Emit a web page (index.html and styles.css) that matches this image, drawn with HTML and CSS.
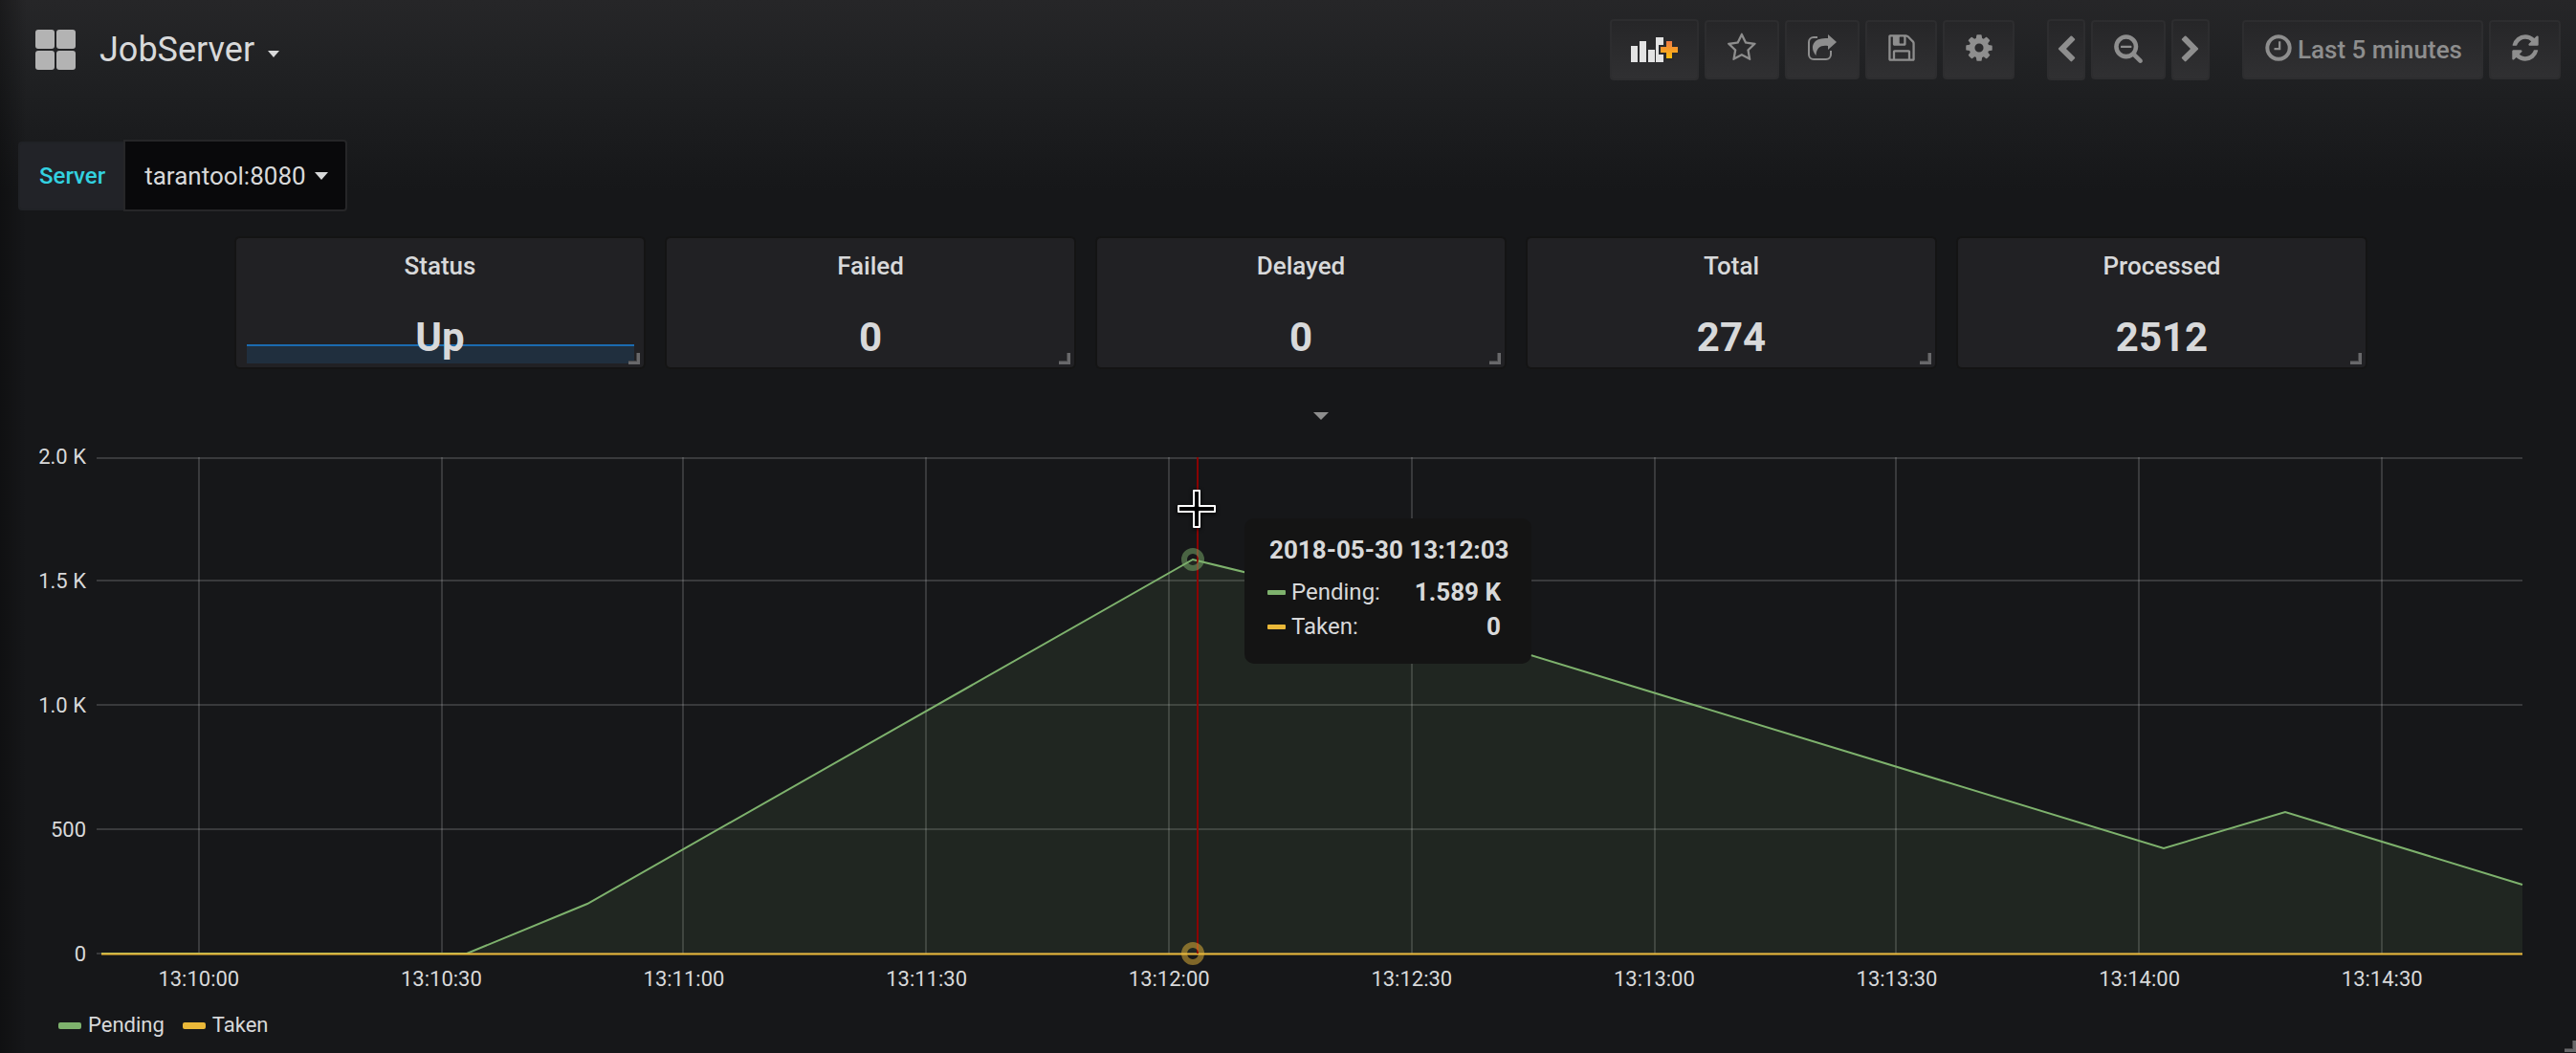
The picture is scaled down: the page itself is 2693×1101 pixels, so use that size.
FILE: index.html
```html
<!DOCTYPE html>
<html lang="en">
<head>
<meta charset="utf-8">
<title>JobServer</title>
<link rel="stylesheet" href="styles.css">
</head>
<body>
<header class="navbar">
  <button class="title" type="button">
    <svg class="title-icon" viewBox="0 0 42 42" aria-hidden="true"><rect width="20" height="20" rx="3"/><rect x="22" width="20" height="20" rx="3"/><rect y="22" width="20" height="20" rx="3"/><rect x="22" y="22" width="20" height="20" rx="3"/></svg>
    <span class="title-text">JobServer</span>
    <span class="caret caret-sm"></span>
  </button>
  <div class="tools">
    <div class="group">
      <button class="btn btn-add" type="button" aria-label="Add panel">
        <svg class="icon-add" viewBox="0 0 50 26"><defs><linearGradient id="plus" x1="0" y1="0" x2="0" y2="1"><stop offset="0" stop-color="#ef7a45"/><stop offset="1" stop-color="#fcbe0c"/></linearGradient></defs><path fill="#e3e3e3" d="M0 9h7v17H0zM9 4h7v22H9zM18 13h7v13h-7zM26 0h8v26h-8z"/><path fill="url(#plus)" stroke="#2a2a2c" stroke-width="4" paint-order="stroke" d="M37 4h6v6h6v6h-6v6h-6v-6h-6v-6h6z"/></svg>
      </button>
      <button class="btn btn-lg" type="button" aria-label="Star"><svg class="icon" viewBox="0 0 1664 1792"><path d="M1137 1004l306-297-422-62-189-382-189 382-422 62 306 297-73 421 378-199 377 199zm527-357q0 22-26 48l-363 354 86 500q1 7 1 20 0 50-41 50-19 0-40-12l-449-236-449 236q-22 12-40 12-21 0-31.5-14.5t-10.5-35.5q0-6 2-20l86-500-364-354q-25-27-25-48 0-37 56-46l502-73 225-455q19-41 49-41t49 41l225 455 502 73q56 9 56 46z"/></svg></button>
      <button class="btn btn-lg" type="button" aria-label="Share"><svg class="icon-share" viewBox="0 0 30 28"><path fill="none" stroke="#8e8e8e" stroke-width="2" d="M10 3H6a5 5 0 0 0-5 5v13a5 5 0 0 0 5 5h13a5 5 0 0 0 5-5v-4"/><path d="M21 0l9 8-9 8v-4c-7-1-12 1-12.500 10C5 18 4 13 6 9.500 9 4.500 14 4 21 4z"/></svg></button>
      <button class="btn btn-md" type="button" aria-label="Save"><svg class="icon" viewBox="0 0 1792 1792"><path d="M512 1536h768v-384h-768v384zm896 0h128v-896q0-14-10-38.500t-20-34.500l-281-281q-10-10-34-20t-39-10v416q0 40-28 68t-68 28h-576q-40 0-68-28t-28-68v-416h-128v1280h128v-416q0-40 28-68t68-28h832q40 0 68 28t28 68v416zm-384-928v-320q0-13-9.500-22.500t-22.500-9.500h-192q-13 0-22.500 9.500t-9.500 22.500v320q0 13 9.500 22.500t22.500 9.500h192q13 0 22.500-9.500t9.500-22.500zm640 32v928q0 40-28 68t-68 28h-1344q-40 0-68-28t-28-68v-1344q0-40 28-68t68-28h928q40 0 88 20t76 48l280 280q28 28 48 76t20 88z"/></svg></button>
      <button class="btn btn-md" type="button" aria-label="Settings"><svg class="icon" viewBox="0 0 1792 1792"><path d="M1152 896q0-106-75-181t-181-75-181 75-75 181 75 181 181 75 181-75 75-181zm512-109v222q0 12-8 23t-20 13l-185 28q-19 54-39 91 35 50 107 138 10 12 10 25t-9 23q-27 37-99 108t-94 71q-12 0-26-9l-138-108q-44 23-91 38-16 136-29 186-7 28-36 28h-222q-14 0-24.500-8.500t-11.500-21.500l-28-184q-49-16-90-37l-141 107q-10 9-25 9-14 0-25-11-126-114-165-168-7-10-7-23 0-12 8-23 15-21 51-66.500t54-70.500q-27-50-41-99l-183-27q-13-2-21-12.500t-8-23.500v-222q0-12 8-23t19-13l186-28q14-46 39-92-40-57-107-138-10-12-10-24 0-10 9-23 26-36 98.500-107.500t94.500-71.500q13 0 26 10l138 107q44-23 91-38 16-136 29-186 7-28 36-28h222q14 0 24.500 8.500t11.500 21.500l28 184q49 16 90 37l142-107q9-9 24-9 13 0 25 10 129 119 165 170 7 8 7 22 0 12-8 23-15 21-51 66.500t-54 70.500q26 50 41 98l183 28q13 2 21 12.500t8 23.500z"/></svg></button>
    </div>
    <div class="group">
      <button class="btn btn-nav" type="button" aria-label="Shift time back"><svg class="icon-nav" viewBox="0 0 1792 1792"><path d="M1427 301l-531 531 531 531q19 19 19 45t-19 45l-166 166q-19 19-45 19t-45-19l-742-742q-19-19-19-45t19-45l742-742q19-19 45-19t45 19l166 166q19 19 19 45t-19 45z"/></svg></button>
      <button class="btn btn-lg" type="button" aria-label="Zoom out"><svg class="icon" viewBox="0 0 1792 1792"><path d="M1088 800v64q0 13-9.500 22.500t-22.500 9.500h-576q-13 0-22.500-9.500t-9.500-22.500v-64q0-13 9.500-22.500t22.500-9.500h576q13 0 22.500 9.500t9.500 22.500zm128 32q0-185-131.500-316.500t-316.500-131.500-316.500 131.500-131.500 316.500 131.500 316.500 316.500 131.500 316.500-131.500 131.500-316.500zm512 832q0 53-37.500 90.500t-90.500 37.500q-54 0-90-38l-343-342q-179 124-399 124-143 0-273.500-55.500t-225-150-150-225-55.500-273.500 55.500-273.500 150-225 225-150 273.500-55.500 273.500 55.500 225 150 150 225 55.500 273.500q0 220-124 399l343 343q37 37 37 90z"/></svg></button>
      <button class="btn btn-nav" type="button" aria-label="Shift time forward"><svg class="icon-nav" viewBox="0 0 1792 1792"><path d="M1363 877l-742 742q-19 19-45 19t-45-19l-166-166q-19-19-19-45t19-45l531-531-531-531q-19-19-19-45t19-45l166-166q19-19 45-19t45 19l742 742q19 19 19 45t-19 45z"/></svg></button>
    </div>
    <div class="group">
      <button class="btn btn-time" type="button"><svg class="icon" viewBox="0 0 1792 1792"><path d="M1024 544v448q0 14-9 23t-23 9h-320q-14 0-23-9t-9-23v-64q0-14 9-23t23-9h224v-352q0-14 9-23t23-9h64q14 0 23 9t9 23zm416 352q0-148-73-273t-198-198-273-73-273 73-198 198-73 273 73 273 198 198 273 73 273-73 198-198 73-273zm224 0q0 209-103 385.500t-279.500 279.500-385.500 103-385.500-103-279.500-279.500-103-385.500 103-385.500 279.500-279.500 385.500-103 385.500 103 279.500 279.500 103 385.500z"/></svg><span class="time-text">Last 5 minutes</span></button>
      <button class="btn btn-md" type="button" aria-label="Refresh"><svg class="icon" viewBox="0 0 1792 1792"><path d="M1639 1056q0 5-1 7-64 268-268 434.500t-478 166.500q-146 0-282.500-55t-243.500-157l-129 129q-19 19-45 19t-45-19-19-45v-448q0-26 19-45t45-19h448q26 0 45 19t19 45-19 45l-137 137q71 66 161 102t187 36q134 0 250-65t186-179q11-17 53-117 8-23 30-23h192q13 0 22.500 9.500t9.500 22.500zm25-800v448q0 26-19 45t-45 19h-448q-26 0-45-19t-19-45 19-45l138-138q-148-137-349-137-134 0-250 65t-186 179q-11 17-53 117-8 23-30 23h-199q-13 0-22.500-9.500t-9.500-22.500v-7q65-268 270-434.500t480-166.500q146 0 284 55.500t245 156.500l130-129q19-19 45-19t45 19 19 45z"/></svg></button>
    </div>
  </div>
</header>

<main>
  <div class="submenu">
    <label class="var-label" for="server">Server</label>
    <button class="var-value" id="server" type="button">tarantool:8080<span class="caret"></span></button>
  </div>

  <section class="stats">
    <article class="stat"><div class="spark"></div><h2 class="stat-title">Status</h2><p class="stat-value">Up</p><span class="handle"></span></article>
    <article class="stat"><h2 class="stat-title">Failed</h2><p class="stat-value">0</p><span class="handle"></span></article>
    <article class="stat"><h2 class="stat-title">Delayed</h2><p class="stat-value">0</p><span class="handle"></span></article>
    <article class="stat"><h2 class="stat-title">Total</h2><p class="stat-value">274</p><span class="handle"></span></article>
    <article class="stat"><h2 class="stat-title">Processed</h2><p class="stat-value">2512</p><span class="handle"></span></article>
  </section>

  <section class="graph">
    <div class="graph-menu"><span class="caret caret-menu"></span></div>
    <div class="chart">
      <div class="y-axis"><span>2.0 K</span><span>1.5 K</span><span>1.0 K</span><span>500</span><span>0</span></div>
      <div class="plot">
        <svg class="series" viewBox="0 0 2536 521" preserveAspectRatio="none" aria-hidden="true">
          <path class="grid" d="M0 1H2536M0 129H2536M0 259H2536M0 389H2536M0 519H2536"/>
          <path class="grid" d="M107 0V519M361 0V519M613 0V519M867 0V519M1121 0V519M1375 0V519M1629 0V519M1881 0V519M2135 0V519M2389 0V519"/>
          <path class="area" d="M387 519L513 467 1146 107 1273 138 2161 409 2288 371 2536 447V519z"/>
          <path class="pending" d="M5 519H387L513 467 1146 107 1273 138 2161 409 2288 371 2536 447"/>
          <path class="taken" d="M5 519.500H2536"/>
        </svg>
        <span class="crosshair"></span>
        <span class="point point-pending"></span>
        <span class="point point-taken"></span>
        <svg class="cursor" viewBox="0 0 40 40" aria-hidden="true"><path d="M17 1h6v16h16v6H23v16h-6V23H1v-6h16z" fill="#000" stroke="#fff" stroke-width="2" stroke-linejoin="round"/></svg>
        <div class="tooltip">
          <div class="tip-time">2018-05-30 13:12:03</div>
          <div class="tip-row"><span class="dash dash-green"></span><span>Pending:</span><strong>1.589 K</strong></div>
          <div class="tip-row"><span class="dash dash-yellow"></span><span>Taken:</span><strong>0</strong></div>
        </div>
      </div>
      <div class="x-axis"><span>13:10:00</span><span>13:10:30</span><span>13:11:00</span><span>13:11:30</span><span>13:12:00</span><span>13:12:30</span><span>13:13:00</span><span>13:13:30</span><span>13:14:00</span><span>13:14:30</span></div>
    </div>
    <div class="legend">
      <span class="legend-item"><span class="key key-green"></span>Pending</span>
      <span class="legend-item"><span class="key key-yellow"></span>Taken</span>
    </div>
    <span class="handle handle-graph"></span>
  </section>
</main>
</body>
</html>
```
FILE: styles.css
```css
* { box-sizing: border-box; }

body {
  margin: 0;
  min-height: 100vh;
  background:
    linear-gradient(90deg, rgba(0, 0, 0, .3), rgba(0, 0, 0, 0) 28px),
    linear-gradient(180deg, #262628 0, #212224 60px, #161719 200px) no-repeat,
    #161719;
  color: #d8d9da;
  font-family: Roboto, "Liberation Sans", sans-serif;
  font-size: 22px;
}

button { font: inherit; color: inherit; cursor: pointer; }
h2, p { margin: 0; }
svg { display: block; flex: none; }

.caret {
  border: 7px solid transparent;
  border-top: 8px solid #d8d9da;
  border-bottom: 0;
}
.caret-sm { border-width: 7px 6px 0; }
.caret-menu { border-width: 8px 8px 0; border-top-color: #8e8e8e; }

/* Navigation bar */
.navbar {
  display: flex;
  justify-content: space-between;
  padding: 19px 16px 0 37px;
}
.title {
  display: flex;
  align-items: center;
  padding: 0;
  border: 0;
  background: none;
  height: 66px;
}
.title-icon { width: 42px; height: 42px; fill: #b3b3b3; }
.title-text { margin: 0 14px 0 25px; font-size: 36px; line-height: 44px; }
.title .caret { margin-top: 9px; }

.tools { display: flex; gap: 34px; }
.group { display: flex; align-items: center; gap: 6px; }
.btn {
  display: flex;
  align-items: center;
  justify-content: center;
  height: 62px;
  padding: 0 0 4px;
  border: 2px solid #2d2d2f;
  border-radius: 4px;
  background: linear-gradient(180deg, #262628, #303032);
  color: #8e8e8e;
  fill: #8e8e8e;
}
.btn-add { width: 93px; height: 64px; padding: 0; }
.btn-lg { width: 78px; }
.btn-md { width: 75px; }
.btn-nav { width: 40px; height: 64px; padding: 0; }
.btn-time { width: 252px; gap: 4px; }
.icon { height: 32px; }
.icon-add { width: 50px; height: 26px; }
.icon-share { width: 30px; height: 28px; }
.icon-nav { width: 30px; height: 30px; }
.time-text { padding-top: 4px; font-size: 26px; font-weight: 500; }

/* Template variables */
.submenu { display: flex; align-items: center; padding: 61px 19px 0; }
.var-label {
  padding: 0 19px 0 20px;
  border: 2px solid #202226;
  border-right: 0;
  border-radius: 4px 0 0 4px;
  background: #222328;
  color: #33d1e0;
  font-size: 24px;
  font-weight: 500;
  line-height: 68px;
}
.var-value {
  display: flex;
  align-items: center;
  gap: 9px;
  height: 75px;
  padding: 0 18px 0 20px;
  border: 2px solid #262628;
  border-radius: 0 4px 4px 0;
  background: #09090b;
  font-size: 26px;
}

/* Single stat panels */
.stats {
  display: flex;
  gap: 20px;
  padding: 26px 218px 0 245px;
}
.stat {
  position: relative;
  flex: 1;
  padding: 14px 0 6px;
  border: 2px solid #141414;
  border-radius: 6px;
  background: #212124;
  text-align: center;
}
.stat-title { font-size: 26px; font-weight: 500; line-height: 30px; }
.stat-value { position: relative; margin-top: 35px; font-size: 42px; font-weight: 700; line-height: 50px; }
.spark {
  position: absolute;
  right: 10px;
  bottom: 4px;
  left: 11px;
  height: 20px;
  border-top: 2px solid #1b6bb0;
  background: #202f3e;
}
.handle {
  position: absolute;
  right: 4px;
  bottom: 3px;
  width: 12px;
  height: 12px;
  border: solid #68686a;
  border-width: 0 3px 3px 0;
  box-shadow: inset -1px -1px #444446;
}

/* Graph panel */
.graph { position: relative; }
.graph-menu { display: flex; justify-content: center; padding: 45px 0 0 68px; }
.chart {
  display: grid;
  grid-template-columns: 101px 1fr;
  padding: 26px 56px 0 0;
}
.y-axis {
  display: flex;
  flex-direction: column;
  justify-content: space-between;
  height: 546px;
  padding-right: 11px;
  line-height: 26px;
  text-align: right;
}
.plot { position: relative; height: 521px; margin-top: 13px; }
.series { width: 100%; height: 100%; overflow: visible; fill: none; }
.series path { vector-effect: non-scaling-stroke; }
.grid { stroke: rgba(200, 200, 200, .2); stroke-width: 2px; }
.area { fill: rgba(126, 178, 109, .1); }
.pending { stroke: #7eb26d; stroke-width: 2px; }
.taken { stroke: #eab839; stroke-width: 2px; }

.crosshair {
  position: absolute;
  top: 0;
  bottom: 2px;
  left: 45.35%;
  width: 2px;
  background: #960000;
  opacity: .9;
}
.point {
  position: absolute;
  left: 45.19%;
  width: 24px;
  height: 24px;
  margin: -12px 0 0 -12px;
  border: 6px solid;
  border-radius: 50%;
  opacity: .5;
}
.point-pending { top: 107px; color: #7eb26d; }
.point-taken { top: 519px; color: #eab839; }
.cursor {
  position: absolute;
  top: 34px;
  left: 45.35%;
  width: 40px;
  height: 40px;
  margin-left: -20px;
  filter: drop-shadow(0 1px 2px #000);
}
.tooltip {
  position: absolute;
  top: 64px;
  left: 47.32%;
  width: 300px;
  height: 152px;
  padding: 16px 32px 0 24px;
  border-radius: 10px;
  background: #141414;
}
.tip-time {
  margin-bottom: 9px;
  padding-left: 2px;
  font-size: 26px;
  font-weight: 700;
  line-height: 34px;
  white-space: nowrap;
}
.tip-row { display: flex; align-items: center; font-size: 24px; line-height: 36px; }
.tip-row strong { margin-left: auto; font-size: 26px; }
.dash { width: 19px; height: 5px; margin-right: 6px; border-radius: 1px; }
.dash-green, .key-green { background: #7eb26d; }
.dash-yellow, .key-yellow { background: #eab839; }

.x-axis {
  display: grid;
  grid-template-columns: repeat(10, 1fr);
  grid-column: 2;
  margin: 0 20px 0 -20px;
  line-height: 26px;
  text-align: center;
}

.legend { display: flex; gap: 19px; padding: 22px 61px 15px; line-height: 26px; }
.legend-item { display: flex; align-items: center; gap: 7px; }
.key { width: 24px; height: 7px; border-radius: 2px; }
.handle-graph { right: 0; bottom: 0; }
```
